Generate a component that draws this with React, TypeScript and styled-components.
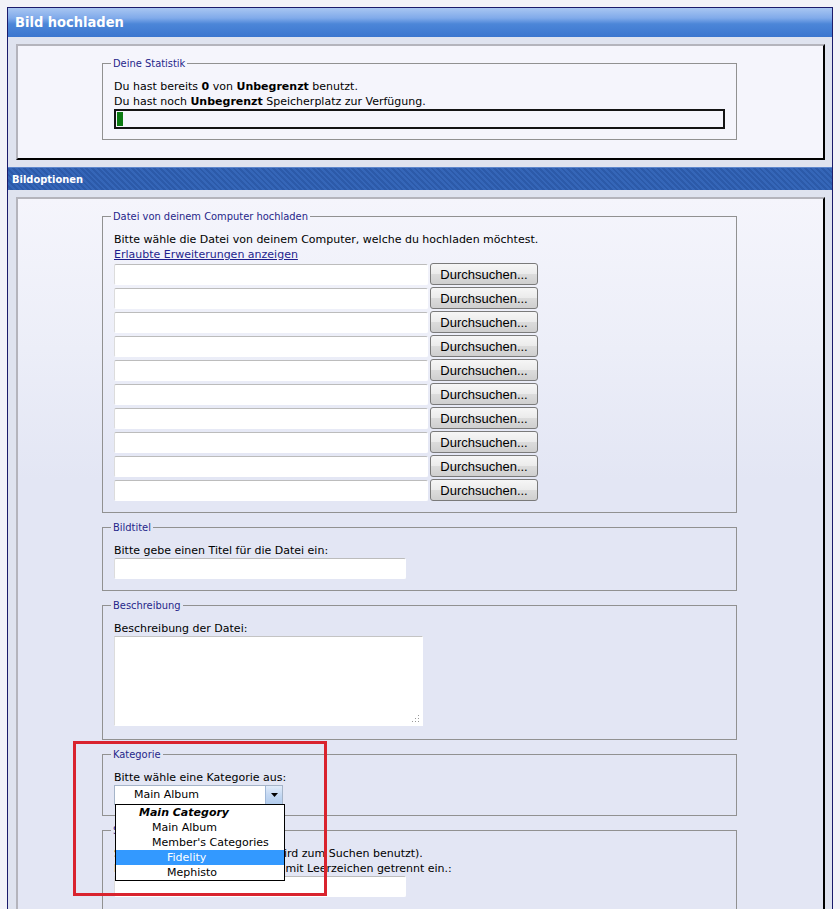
import styled, { createGlobalStyle } from 'styled-components';

const GlobalStyle = createGlobalStyle`
  body {
    margin:0;
    background:#f2f2f8;
    font-family:"DejaVu Sans", Verdana, sans-serif;
    font-size:11px;
    color:#000;
  }
`;

const uploadRows = Array.from({ length: 10 }, (_, i) => i);

const categories = [
  { label: 'Main Category', level: 0, group: true },
  { label: 'Main Album', level: 1 },
  { label: "Member's Categories", level: 1 },
  { label: 'Fidelity', level: 2, active: true },
  { label: 'Mephisto', level: 2 },
];

export default function App() {
  return (
    <Page>
      <GlobalStyle />
      <Frame>
        <Header>Bild hochladen</Header>
        <Wrap>
          <Box $pad="11px 0 18px">
            <Fieldset>
              <Legend>Deine Statistik</Legend>
              <Line>
                Du hast bereits <b>0</b> von <b>Unbegrenzt</b> benutzt.
              </Line>
              <Line>
                Du hast noch <b>Unbegrenzt</b> Speicherplatz zur Verfügung.
              </Line>
              <Progress>
                <ProgressFill style={{ width: 6 }} />
              </Progress>
            </Fieldset>
          </Box>
        </Wrap>
        <SubHeader>Bildoptionen</SubHeader>
        <Wrap $bottom="0">
          <Box $pad="11px 0 20px" $fade>
            <Fieldset>
              <Legend>Datei von deinem Computer hochladen</Legend>
              <Line>Bitte wähle die Datei von deinem Computer, welche du hochladen möchtest.</Line>
              <Line>
                <Link href="#">Erlaubte Erweiterungen anzeigen</Link>
              </Line>
              {uploadRows.map((i) => (
                <UploadRow key={`upload-${i}`}>
                  <TextInput $width={314} />
                  <BrowseButton type="button">Durchsuchen...</BrowseButton>
                </UploadRow>
              ))}
            </Fieldset>

            <Fieldset $gap>
              <Legend>Bildtitel</Legend>
              <Line>Bitte gebe einen Titel für die Datei ein:</Line>
              <TextInput $width={292} $after={1} />
            </Fieldset>

            <Fieldset $gap>
              <Legend>Beschreibung</Legend>
              <Line>Beschreibung der Datei:</Line>
              <AreaWrap>
                <TextArea />
                <Grip width="8" height="8" viewBox="0 0 8 8">
                  <rect x="6" y="0" width="1" height="1" fill="#999" />
                  <rect x="3" y="3" width="1" height="1" fill="#999" />
                  <rect x="6" y="3" width="1" height="1" fill="#999" />
                  <rect x="0" y="6" width="1" height="1" fill="#999" />
                  <rect x="3" y="6" width="1" height="1" fill="#999" />
                  <rect x="6" y="6" width="1" height="1" fill="#999" />
                </Grip>
              </AreaWrap>
            </Fieldset>

            <Fieldset $gap>
              <Legend>Kategorie</Legend>
              <Line>Bitte wähle eine Kategorie aus:</Line>
              <SelectWrap>
                <SelectBox>
                  <SelectValue>Main Album</SelectValue>
                  <SelectArrow>
                    <svg width="7" height="4" viewBox="0 0 7 4">
                      <path d="M0 0 H7 L3.5 4 Z" fill="#000" />
                    </svg>
                  </SelectArrow>
                </SelectBox>
                <OptionList>
                  {categories.map((c) => (
                    <OptionItem
                      key={c.label}
                      $level={c.level}
                      $group={c.group}
                      $active={c.active}
                    >
                      {c.label}
                    </OptionItem>
                  ))}
                </OptionList>
              </SelectWrap>
            </Fieldset>

            <Fieldset $gap>
              <Legend>Schlüsselwörter</Legend>
              <Line>Schlüsselwörter für das Bild (wird zum Suchen benutzt).</Line>
              <Line>Bitte gebe die Schlüsselwörter mit Leerzeichen getrennt ein.:</Line>
              <TextInput $width={292} $after={2} />
            </Fieldset>
          </Box>
        </Wrap>
      </Frame>
      <Marker />
    </Page>
  );
}

const Page = styled.div`
  position:relative;
  padding:7px;
`;

const Frame = styled.div`
  border:1px solid #1b1b6b;
  background:#dfe3ef;
`;

const Header = styled.div`
  height:29px;
  line-height:29px;
  padding-left:7px;
  font-family:"DejaVu Sans Condensed", Tahoma, sans-serif;
  font-weight:bold;
  font-size:14.5px;
  color:#fff;
  background:linear-gradient(to bottom, #a8c6f2 0%, #80aaea 35%, #4c86d8 55%, #3b76cf 100%);
`;

const SubHeader = styled.div`
  height:23px;
  line-height:23px;
  padding-left:4px;
  font-family:"DejaVu Sans Condensed", Tahoma, sans-serif;
  font-weight:bold;
  font-size:11px;
  color:#fff;
  border-top:1px solid #5d86cc;
  box-sizing:border-box;
  background:repeating-linear-gradient(45deg, #3566b8 0 2px, #2c5aa9 2px 4px);
`;

const Wrap = styled.div<{ $bottom?: string }>`
  padding:7px 7px ${(p) => p.$bottom ?? '7px'} 8px;
`;

const Box = styled.div<{ $pad: string, $fade?: boolean }>`
  padding:${(p) => p.$pad};
  border-top:2px solid #b4b4bc;
  border-left:2px solid #b4b4bc;
  border-right:2px solid #000;
  border-bottom:2px solid #000;
  background:${(p) => (p.$fade
    ? 'linear-gradient(to bottom, #f5f5fc 0px, #eceef8 150px, #e3e6f4 280px, #e3e6f4 100%)'
    : '#f5f5fc')};
`;

const Fieldset = styled.fieldset<{ $gap?: boolean }>`
  box-sizing:border-box;
  width:635px;
  margin:${(p) => (p.$gap ? '8px' : '0')} 0 0 84px;
  padding:9px 11px 10px;
  border:1px solid #919191;
  min-width:0;
`;

const Legend = styled.legend`
  padding:0 2px;
  margin-left:-3px;
  font-family:"DejaVu Sans Condensed", Tahoma, sans-serif;
  font-size:11px;
  line-height:13px;
  color:#26268a;
`;

const Line = styled.div`
  line-height:15px;
  white-space:nowrap;
`;

const Link = styled.a`
  color:#1e1e8c;
  text-decoration:underline;
`;

const Progress = styled.div`
  box-sizing:border-box;
  height:20px;
  border:2px solid #141414;
  padding:1px;
  background:#f5f5fc;
`;

const ProgressFill = styled.div`
  height:100%;
  background:#0b7a12;
`;

const UploadRow = styled.div`
  display:flex;
  align-items:center;
  gap:2px;
  height:24px;
`;

const TextInput = styled.input<{ $width: number, $after?: number }>`
  box-sizing:border-box;
  display:block;
  width:${(p) => p.$width}px;
  height:21px;
  margin:0 0 ${(p) => p.$after ?? 0}px;
  border:1px solid #fff;
  border-top-color:#bcbcbc;
  border-left-color:#dcdcdc;
  border-radius:2px;
  background:#fff;
  outline:none;
`;

const BrowseButton = styled.button`
  box-sizing:border-box;
  width:108px;
  height:22px;
  margin:0;
  padding:0;
  border:1px solid #7a7a7a;
  border-radius:3px;
  background:linear-gradient(to bottom, #f6f6f6 0%, #ebebeb 50%, #dcdcdc 51%, #cfcfcf 100%);
  font-family:"Liberation Sans", Arial, sans-serif;
  font-size:13px;
  color:#000;
`;

const AreaWrap = styled.div`
  position:relative;
  width:309px;
  height:90px;
  margin-bottom:3px;
`;

const TextArea = styled.textarea`
  box-sizing:border-box;
  display:block;
  width:100%;
  height:100%;
  margin:0;
  border:1px solid #fff;
  border-top-color:#c4c4c4;
  border-left-color:#dcdcdc;
  background:#fff;
  resize:none;
  outline:none;
`;

const Grip = styled.svg`
  position:absolute;
  right:3px;
  bottom:3px;
`;

const SelectWrap = styled.div`
  position:relative;
  width:169px;
`;

const SelectBox = styled.div`
  box-sizing:border-box;
  display:flex;
  height:20px;
  border:1px solid #a5b4c8;
  background:#fff;
`;

const SelectValue = styled.div`
  flex:1;
  padding-left:19px;
  line-height:18px;
`;

const SelectArrow = styled.div`
  width:16px;
  display:flex;
  align-items:center;
  justify-content:center;
  border-left:1px solid #a0b8d8;
  background:linear-gradient(to bottom, #e2ecfa 0%, #c4d8f2 50%, #b2cced 100%);
`;

const OptionList = styled.div`
  position:absolute;
  top:19px;
  left:1px;
  width:170px;
  box-sizing:border-box;
  border:1px solid #000;
  background:#fff;
  z-index:2;
`;

const OptionItem = styled.div<{ $level: number, $group?: boolean, $active?: boolean }>`
  height:15px;
  line-height:15px;
  padding-left:${(p) => [23, 36, 51][p.$level]}px;
  font-weight:${(p) => (p.$group ? 'bold' : 'normal')};
  font-style:${(p) => (p.$group ? 'italic' : 'normal')};
  background:${(p) => (p.$active ? '#3399ff' : 'transparent')};
  color:${(p) => (p.$active ? '#fff' : '#000')};
  white-space:nowrap;
`;

const Marker = styled.div`
  position:absolute;
  left:73px;
  top:741px;
  width:254px;
  height:155px;
  box-sizing:border-box;
  border:3px solid #d9232e;
  z-index:3;
  pointer-events:none;
`;
